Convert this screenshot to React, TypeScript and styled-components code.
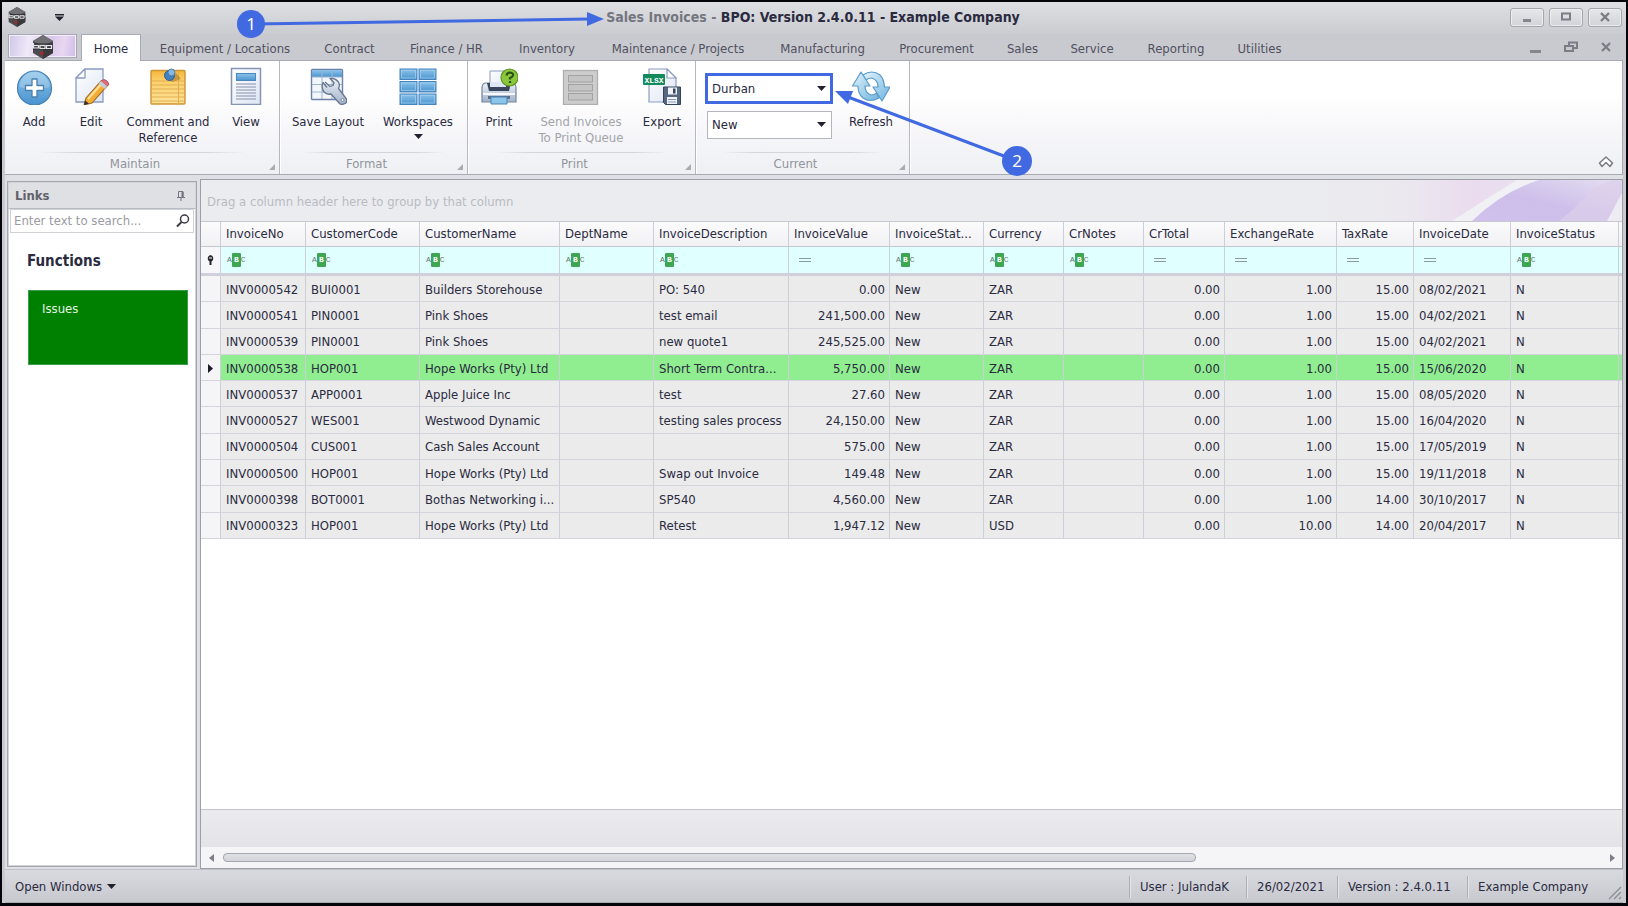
import React from "react";
import styled, { createGlobalStyle, css } from "styled-components";

const uiFont = `"DejaVu Sans Condensed", "Noto Sans", sans-serif`;
const ink = "#2a2a40";
const accent = "#4169e1";
const line = "#a9abb4";

const GlobalStyle = createGlobalStyle`
  *, *::before, *::after { box-sizing: border-box; }
  body { margin: 0; background: #000; }
  button, input, select, table { font: inherit; color: inherit; }
`;

/* ---------- window frame ---------- */

const Frame = styled.div`
  position: relative;
  display: flex;
  flex-direction: column;
  min-height: 100vh;
  border: solid #04040a;
  border-width: 2px 2px 3px;
  padding: 0 3px;
  background: #c9cad0;
  color: ${ink};
  font: 13px/16px ${uiFont};
  overflow: hidden;
`;

const TitleBar = styled.header`
  display: grid;
  grid-template-columns: 120px 1fr 120px;
  align-items: center;
  height: 32px;
  margin: 0 -3px;
  padding: 0 4px 2px 2px;
  background: linear-gradient(#dedfe2, #cbccd1);
`;

const QuickAccess = styled.div`
  display: flex;
  align-items: center;
  gap: 28px;
  padding-left: 3px;
`;

const Title = styled.h1`
  margin: 0;
  text-align: center;
  font: bold 14px/16px ${uiFont};
  white-space: nowrap;
  span { color: #74767f; }
`;

const WindowButtons = styled.div`
  display: flex;
  justify-content: flex-end;
  gap: 5px;
`;

const WindowButton = styled.button`
  display: grid;
  place-items: center;
  width: 34px;
  height: 19px;
  padding: 0;
  border: 1px solid #a4a6ae;
  border-radius: 3px;
  background: linear-gradient(#e6e7ea, #d2d3d8);
  box-shadow: inset 0 0 0 1px #eeeef1;
`;

const PlainButton = styled.button`
  display: grid;
  place-items: center;
  padding: 0;
  border: 0;
  background: none;
`;

const TabRow = styled.nav`
  display: flex;
  height: 26px;
  padding-left: 3px;
`;

const AppButton = styled.button`
  display: grid;
  place-items: center;
  width: 69px;
  height: 24px;
  margin-right: 4px;
  padding: 0;
  border: 1px solid #a9a6b6;
  background: linear-gradient(100deg, #cfc6e8, #efe9f8 30%, #d9c8ea 60%, #e8d6f2 80%, #cdbce6);
  box-shadow: inset 0 0 0 1px #f4f0fa;
`;

const Tab = styled.button<{ $width: number; $active?: boolean }>`
  flex: 0 0 ${(p) => p.$width}px;
  height: 27px;
  padding: 2px 0 0;
  border: 0;
  background: none;
  color: #50505e;
  white-space: nowrap;
  text-align: center;
  ${(p) =>
    p.$active &&
    css`
      z-index: 1;
      margin-right: 2px;
      border: 1px solid ${line};
      border-bottom: 0;
      background: #fff;
      color: ${ink};
    `}
`;

const ChildButtons = styled.div`
  display: flex;
  align-items: center;
  gap: 22px;
  margin-left: auto;
  padding-right: 11px;
`;

/* ---------- ribbon ---------- */

const Ribbon = styled.section`
  display: flex;
  height: 115px;
  border: 1px solid ${line};
  border-width: 1px 1px 1px 0;
  background: linear-gradient(#fff 30%, #f6f6f9 65%, #eef0f3);
`;

const Group = styled.div<{ $width: number }>`
  display: flex;
  flex-direction: column;
  flex: 0 0 ${(p) => p.$width}px;
  border-right: 1px solid #b6b8c0;
  box-shadow: 1px 0 #fff;
`;

const GroupTools = styled.div<{ $indent?: number }>`
  display: flex;
  flex: 1;
  padding-left: ${(p) => p.$indent ?? 0}px;
`;

const GroupCaption = styled.div`
  position: relative;
  height: 22px;
  padding: 4px 14px 0 0;
  text-align: center;
  color: #92949c;
  &::before {
    content: "";
    position: absolute;
    inset: 0 12% auto;
    height: 1px;
    background: linear-gradient(90deg, transparent, #d3d5da 20%, #d3d5da 80%, transparent);
  }
  &::after {
    content: "";
    position: absolute;
    right: 4px;
    bottom: 4px;
    border: 3px solid;
    border-color: transparent #a9abb2 #a9abb2 transparent;
  }
`;

const Tool = styled.button<{ $width: number }>`
  display: flex;
  flex-direction: column;
  align-items: center;
  flex: 0 0 ${(p) => p.$width}px;
  padding: 6px 0 0;
  border: 0;
  background: none;
  text-align: center;
  white-space: pre-line;
  &:disabled { color: #a2a4aa; }
  > svg:first-child { margin-bottom: 9px; }
  > svg + svg { margin-top: 4px; }
`;

const ComboStack = styled.div`
  display: flex;
  flex-direction: column;
  gap: 7px;
  width: 128px;
  padding-top: 12px;
`;

const Combo = styled.div<{ $marked?: boolean }>`
  position: relative;
  height: ${(p) => (p.$marked ? 31 : 28)}px;
  margin: ${(p) => (p.$marked ? "0" : "0 1px 0 2px")};
  border: ${(p) => (p.$marked ? `3px solid ${accent}` : "1px solid #b4b6be")};
  background: #fff;
  select {
    width: 100%;
    height: 100%;
    padding: 0 20px 0 4px;
    border: 0;
    background: none;
    appearance: none;
  }
  svg {
    position: absolute;
    top: 10px;
    right: ${(p) => (p.$marked ? 4 : 5)}px;
    pointer-events: none;
  }
`;

const Collapse = styled(PlainButton)`
  align-self: flex-end;
  margin: 0 8px 6px auto;
`;

/* ---------- work area ---------- */

const WorkArea = styled.main`
  display: flex;
  flex: 1;
  gap: 3px;
  padding: 4px 0 0 2px;
  background: #dfe0e5;
`;

const SidePanel = styled.aside`
  flex: 0 0 190px;
  margin: 2px 0 2px;
  border: 1px solid #a4a6b0;
  box-shadow: inset 0 0 0 1px #d2d3d8;
  background: #fff;
`;

const SideHeader = styled.div`
  display: flex;
  align-items: center;
  justify-content: space-between;
  height: 27px;
  padding: 0 10px 0 6px;
  border: 1px solid #d2d3d8;
  border-bottom-color: #b9bbc3;
  background: #dfe0e3;
  color: #5f616b;
  font-weight: bold;
`;

const Search = styled.label`
  display: flex;
  align-items: center;
  height: 24px;
  margin: 0 2px;
  padding: 0 3px;
  border: 1px solid #d0d1d7;
  input {
    flex: 1;
    min-width: 0;
    padding: 0;
    border: 0;
    outline: 0;
    background: none;
  }
  input::placeholder { color: #999ba3; opacity: 1; }
`;

const SideTitle = styled.h2`
  margin: 18px 0 19px 19px;
  font: bold 15px/20px ${uiFont};
`;

const Tile = styled.button`
  display: flex;
  width: calc(100% - 28px);
  height: 75px;
  margin: 0 8px 0 20px;
  padding: 10px 13px;
  border: 1px solid #3c9c50;
  background: #008000;
  color: #e4f4e4;
`;

const GridPanel = styled.section`
  display: flex;
  flex-direction: column;
  flex: 1;
  min-width: 0;
  border: 1px solid #9c9ea8;
  background: #fff;
`;

const GroupBox = styled.div`
  position: relative;
  display: flex;
  align-items: center;
  height: 41px;
  padding: 3px 6px 0;
  background: #ebecef;
  color: #b9bbc3;
  overflow: hidden;
  svg { position: absolute; top: 0; right: 0; }
`;

const Table = styled.table`
  width: 100%;
  height: 318px;
  table-layout: fixed;
  border-collapse: separate;
  border-spacing: 0;
`;

const cell = css`
  padding: 0 4px;
  border-right: 1px solid #cdcfd8;
  border-bottom: 1px solid #d3d4dc;
  overflow: hidden;
  white-space: nowrap;
  text-overflow: ellipsis;
  &:last-child { border-right: 0; }
`;

const HeadCell = styled.th`
  ${cell}
  height: 26px;
  padding-left: 5px;
  border-top: 1px solid #c6c7cf;
  border-bottom: 1px solid #c6c7cf;
  background: linear-gradient(#fbfbfc, #f1f1f4);
  font-weight: normal;
  text-align: left;
`;

const FilterCell = styled.td<{ $marker?: boolean }>`
  ${cell}
  height: 29px;
  border-bottom: 3px solid #cfd0da;
  background: ${(p) => (p.$marker ? "#f7f7fa" : "#e0ffff")};
  svg { display: block; }
  > svg { margin: 1px auto 0; }
`;

const Row = styled.tr<{ $current?: boolean }>`
  background: ${(p) => (p.$current ? "#90ee90" : "#ebebeb")};
`;

const Cell = styled.td<{ $right?: boolean }>`
  ${cell}
  padding: 2px 4px 0 5px;
  text-align: ${(p) => (p.$right ? "right" : "left")};
`;

const MarkerCell = styled.th`
  ${cell}
  background: #f5f5f8;
  svg { display: block; margin: 2px auto 0; }
`;

const FilterButton = styled.button`
  display: flex;
  align-items: center;
  height: 14px;
  padding: 0 2px;
  border: 0;
  background: none;
  color: #66756f;
  font: 8px/14px "Liberation Mono", monospace;
  b {
    width: 9px;
    border-radius: 1px;
    background: #3ea552;
    color: #fff;
    text-align: center;
  }
`;

const Summary = styled.div`
  height: 38px;
  margin-top: auto;
  border-top: 1px solid #c4c6cc;
  background: linear-gradient(#ebebee, #e4e4e8);
`;

const ScrollBar = styled.div`
  display: flex;
  align-items: center;
  gap: 9px;
  height: 21px;
  padding: 0 7px 0 8px;
  background: #f5f5f8;
`;

const Track = styled.div`
  flex: 1;
  div {
    width: calc(71% - 5px);
    height: 9px;
    border: 1px solid #a4a7af;
    border-radius: 4px;
    background: linear-gradient(#dfe1e5, #d2d4d9);
  }
`;

/* ---------- status bar ---------- */

const StatusBar = styled.footer`
  display: flex;
  align-items: center;
  height: 34px;
  padding: 1px 1px 0 10px;
  border-top: 1px solid #c0c1c8;
  border-bottom: 1px solid #a9abb4;
  background: linear-gradient(#d9dae0, #c8c9cf);
`;

const OpenWindows = styled(PlainButton)`
  display: flex;
  align-items: center;
  gap: 5px;
  margin-right: auto;
`;

const StatusItem = styled.span<{ $width: number }>`
  width: ${(p) => p.$width}px;
  padding-left: 10px;
  border-left: 1px solid #adafb7;
  box-shadow: inset 1px 0 #e3e4e8;
  line-height: 22px;
  white-space: nowrap;
`;

const Grip = styled.svg`
  align-self: flex-end;
  margin-bottom: 2px;
`;

const Notes = styled.svg`
  position: absolute;
  inset: -2px auto auto -2px;
  pointer-events: none;
  text { font: 17px/20px "Noto Sans", sans-serif; }
`;

/* ---------- drawings ---------- */

const Caret = () => (
  <svg width="9" height="5" viewBox="0 0 9 5" aria-hidden="true">
    <path d="M0 0h9L4.500 5z" fill="#22222e" />
  </svg>
);

const Logo = ({ size }: { size: number }) => (
  <svg width={size} height={size} viewBox="0 0 24 24" aria-hidden="true">
    <path d="M12 0l10 6v12l-10 6L2 18V6z" fill="#4c4c50" />
    <path d="M12 0l10 6-10 5L2 6z" fill="#707074" />
    <path d="M12 12l10 0v6l-10 6z" fill="#3a3a3e" />
    <path d="M2 9h20M2 14h20" stroke="#2a2a2e" strokeWidth="1" />
    <path d="M2.500 8v5h5v-2.500h-5M9 13.500v-3h5v3zM15.500 13.500v-3h5v3z" fill="none" stroke="#e6e6e8" strokeWidth="1.200" />
    <path d="M9 17l2 2.500 1.500-2.500" fill="none" stroke="#a8282c" strokeWidth="1.600" />
  </svg>
);

const Defs = () => (
  <svg width="0" height="0" style={{ position: "absolute" }} aria-hidden="true">
    <defs>
      <linearGradient id="blue" x1="0" y1="0" x2="0" y2="1">
        <stop offset="0" stopColor="#8cc4ea" />
        <stop offset="1" stopColor="#4a93cf" />
      </linearGradient>
      <linearGradient id="page" x1="0" y1="0" x2="1" y2="1">
        <stop offset="0" stopColor="#ffffff" />
        <stop offset="1" stopColor="#dde5f4" />
      </linearGradient>
      <linearGradient id="note" x1="0" y1="0" x2="0" y2="1">
        <stop offset="0" stopColor="#f5b53c" />
        <stop offset="0.3" stopColor="#fbd069" />
        <stop offset="1" stopColor="#fee39a" />
      </linearGradient>
      <linearGradient id="steel" x1="0" y1="0" x2="0" y2="1">
        <stop offset="0" stopColor="#eef2f8" />
        <stop offset="1" stopColor="#9fb0c8" />
      </linearGradient>
      <linearGradient id="ice" x1="0" y1="0" x2="1" y2="1">
        <stop offset="0" stopColor="#e2f4fc" />
        <stop offset="1" stopColor="#6fb4e0" />
      </linearGradient>
      <linearGradient id="petal" x1="0" y1="1" x2="1" y2="0">
        <stop offset="0" stopColor="#d0c2ec" />
        <stop offset="0.45" stopColor="#cdbeea" />
        <stop offset="1" stopColor="#e4def1" />
      </linearGradient>
      <linearGradient id="blush" x1="0" y1="0" x2="1" y2="0">
        <stop offset="0" stopColor="#ebecef" />
        <stop offset="0.45" stopColor="#ebe9ef" />
        <stop offset="0.8" stopColor="#eadcee" />
        <stop offset="1" stopColor="#e9e0f0" />
      </linearGradient>
    </defs>
  </svg>
);

const Icon = ({ children }: { children: React.ReactNode }) => (
  <svg width="38" height="38" viewBox="0 0 38 38" aria-hidden="true">
    {children}
  </svg>
);

const AddIcon = () => (
  <Icon>
    <circle cx="19.500" cy="21" r="17" fill="url(#blue)" stroke="#4682b4" strokeWidth="1.200" />
    <path d="M4.500 20a15 15 0 0 1 30 0q-15 5-30 0z" fill="#fff" opacity="0.22" />
    <path d="M17 12h5v6.500h6.500v5H22V30h-5v-6.500h-6.500v-5H17z" fill="#fff" stroke="#4a7fae" strokeWidth="1.300" strokeLinejoin="round" />
  </Icon>
);

const EditIcon = () => (
  <Icon>
    <path d="M13 2h18v33H4V11z" fill="url(#page)" stroke="#8b9cc2" strokeWidth="1.300" />
    <path d="M13 2v9H4z" fill="#fff" stroke="#8b9cc2" strokeWidth="1.300" strokeLinejoin="round" />
    <path d="M14 31l15-17 6 5-15 17-8 2z" fill="#f5ac34" stroke="#9a6a2c" strokeWidth="1.100" />
    <path d="M16 32l15-17" stroke="#fde09a" strokeWidth="2" />
    <path d="M29 14l3-1.500q4 1 5 5L35 19z" fill="#e07080" stroke="#b05060" />
    <path d="M26.500 16.500l6 5.500 2.500-3-6-5z" fill="#c8ccd4" />
    <path d="M13 33.500l4 3-5 1.500z" fill="#3c3030" />
  </Icon>
);

const NoteIcon = () => (
  <Icon>
    <rect x="2" y="3.500" width="34" height="33.500" rx="1" fill="url(#note)" stroke="#cf9334" strokeWidth="1.400" />
    <path d="M3 14h32M3 18h32M3 22h32M3 26h32M3 30h32M3 34h32" stroke="#e3ad50" />
    <path d="M29.500 5v32" stroke="#e3ad50" />
    <path d="M21 13l6-7 5 6-9 3z" fill="#9a6a20" opacity="0.5" />
    <circle cx="20.500" cy="8.500" r="5" fill="#4382bd" stroke="#2d5f92" />
    <circle cx="22.500" cy="5.500" r="3.500" fill="#86b9e2" stroke="#3a70a4" strokeWidth="0.800" />
  </Icon>
);

const ViewIcon = () => (
  <Icon>
    <rect x="4.500" y="1.500" width="29" height="36" fill="url(#page)" stroke="#8794b4" strokeWidth="1.500" />
    <rect x="9.500" y="6.500" width="19" height="7" fill="url(#blue)" stroke="#4d86ba" />
    <path d="M9 17h20M9 20h20M9 23h20M9 26h20M9 29h20M9 32h20" stroke="#8590aa" strokeWidth="1.200" />
  </Icon>
);

const LayoutIcon = () => (
  <Icon>
    <rect x="2.500" y="2.500" width="31" height="30" rx="1" fill="#f3f6fb" stroke="#6c82aa" strokeWidth="1.400" />
    <rect x="3" y="3" width="30" height="7" fill="url(#blue)" />
    <path d="M3 10h30M3 17.500h30M3 25h30M13 3v29M23 3v29" stroke="#9fb2d0" />
    <path
      d="M16 14l5 4.500 3-1 1-3-4-4q5-.5 8 3 2.500 3 .5 7l8 10.500q1 3-1.500 4.500t-5 .5l-9-10q-4 1-7-2-3-4-1-9.500l4 5"
      fill="url(#steel)"
      stroke="#68778f"
      strokeWidth="1.300"
      strokeLinejoin="round"
      transform="translate(0 1)"
    />
    <circle cx="33.500" cy="33" r="1.500" fill="#fff" stroke="#68778f" strokeWidth="0.800" />
  </Icon>
);

const WorkspacesIcon = () => (
  <Icon>
    {[2, 14.500, 27].map((y) =>
      [1, 20].map((x) => (
        <g key={`${x}-${y}`}>
          <rect x={x} y={y} width="17" height="10.500" fill="url(#blue)" stroke="#4684bd" />
          <rect x={x + 1.500} y={y + 1.500} width="14" height="7.500" fill="none" stroke="#a6d0ee" strokeWidth="0.700" />
        </g>
      ))
    )}
  </Icon>
);

const PrintIcon = () => (
  <Icon>
    <path d="M10 4h16v18H10z" fill="url(#page)" stroke="#8b9cc2" />
    <path d="M5 16h28q3 1 3 5v14H2V21q0-4 3-5z" fill="url(#steel)" stroke="#76869f" strokeWidth="1.200" />
    <path d="M7 16h24l-2 8H9z" fill="#38445c" />
    <path d="M10 15h16v5H10z" fill="#dfe6f3" />
    <path d="M3 27h32" stroke="#f6f8fb" strokeWidth="2" />
    <path d="M8 29h22v3H8z" fill="#5c6c88" />
    <path d="M11 30h16v7H11z" fill="#8cc4ea" stroke="#4a83b4" />
    <circle cx="29.500" cy="10.500" r="8.500" fill="#8cc63a" stroke="#5d9424" strokeWidth="1.200" />
    <path d="M26.500 8.500q.5-3 3.500-3 3.500.5 3 3-.5 1.500-3 2.500v1.500M30 14v2" fill="none" stroke="#26501a" strokeWidth="2.200" />
  </Icon>
);

const QueueIcon = () => (
  <Icon>
    <rect x="1.500" y="3.500" width="34" height="34" fill="#cdcdcd" stroke="#aeaeae" strokeWidth="1.300" />
    {[8, 17, 26].map((y) => (
      <rect key={y} x="6.500" y={y + 0.500} width="24" height="6.500" fill="#c4c4c4" stroke="#a2a2a2" />
    ))}
  </Icon>
);

const ExportIcon = () => (
  <Icon>
    <path d="M6 2h18l9 9v24H6z" fill="url(#page)" stroke="#8b9cc2" strokeWidth="1.200" />
    <path d="M24 2v9h9z" fill="#fff" stroke="#8b9cc2" strokeWidth="1.200" strokeLinejoin="round" />
    <rect x="0" y="7" width="22" height="11" rx="1" fill="#138a5c" />
    <text x="11" y="15.500" textAnchor="middle" fill="#fff" fontFamily="Liberation Mono, monospace" fontSize="8" fontWeight="bold">
      XLSX
    </text>
    <path d="M20.500 20H37.500v17.500H22.500l-2-2z" fill="#566880" stroke="#34445c" />
    <rect x="25" y="20.500" width="9" height="7" fill="#f0f4fa" />
    <rect x="30" y="21.500" width="2.500" height="5" fill="#34445c" />
    <rect x="24" y="30" width="10" height="7" fill="#f0f4fa" />
    <path d="M25 32.500h8M25 35h8" stroke="#8a9ab4" />
  </Icon>
);

const RefreshIcon = () => (
  <Icon>
    <path
      d="M11 8Q20 2 28 8q4 4 4.500 12H38l-8 14-9-14h5q0-7-6-9-4 0-6 2z"
      fill="url(#ice)" stroke="#5b9cc8" strokeWidth="1.200" strokeLinejoin="round"
    />
    <path
      d="M27 31q-9 5-16 0-5-4-5-12H.500L9 5l9 14h-5q0 7 6 9 4 0 5.500-2z"
      fill="url(#ice)" stroke="#5b9cc8" strokeWidth="1.200" strokeLinejoin="round"
    />
  </Icon>
);

/* ---------- data ---------- */

const tabs: [string, number][] = [
  ["Home", 60], ["Equipment / Locations", 164], ["Contract", 85], ["Finance / HR", 109],
  ["Inventory", 92], ["Maintenance / Projects", 170], ["Manufacturing", 119], ["Procurement", 109],
  ["Sales", 63], ["Service", 76], ["Reporting", 92], ["Utilities", 75],
];

type Column = { name: string; width: number; filter: "abc" | "eq"; right?: boolean };

const columns: Column[] = [
  { name: "InvoiceNo", width: 85, filter: "abc" },
  { name: "CustomerCode", width: 114, filter: "abc" },
  { name: "CustomerName", width: 140, filter: "abc" },
  { name: "DeptName", width: 94, filter: "abc" },
  { name: "InvoiceDescription", width: 135, filter: "abc" },
  { name: "InvoiceValue", width: 101, filter: "eq", right: true },
  { name: "InvoiceStat...", width: 94, filter: "abc" },
  { name: "Currency", width: 80, filter: "abc" },
  { name: "CrNotes", width: 80, filter: "abc" },
  { name: "CrTotal", width: 81, filter: "eq", right: true },
  { name: "ExchangeRate", width: 112, filter: "eq", right: true },
  { name: "TaxRate", width: 77, filter: "eq", right: true },
  { name: "InvoiceDate", width: 97, filter: "eq" },
  { name: "InvoiceStatus", width: 108, filter: "abc" },
];

const rows = [
  ["INV0000542", "BUI0001", "Builders Storehouse", "", "PO: 540", "0.00", "New", "ZAR", "", "0.00", "1.00", "15.00", "08/02/2021", "N"],
  ["INV0000541", "PIN0001", "Pink Shoes", "", "test email", "241,500.00", "New", "ZAR", "", "0.00", "1.00", "15.00", "04/02/2021", "N"],
  ["INV0000539", "PIN0001", "Pink Shoes", "", "new quote1", "245,525.00", "New", "ZAR", "", "0.00", "1.00", "15.00", "04/02/2021", "N"],
  ["INV0000538", "HOP001", "Hope Works (Pty) Ltd", "", "Short Term Contra...", "5,750.00", "New", "ZAR", "", "0.00", "1.00", "15.00", "15/06/2020", "N"],
  ["INV0000537", "APP0001", "Apple Juice Inc", "", "test", "27.60", "New", "ZAR", "", "0.00", "1.00", "15.00", "08/05/2020", "N"],
  ["INV0000527", "WES001", "Westwood Dynamic", "", "testing sales process", "24,150.00", "New", "ZAR", "", "0.00", "1.00", "15.00", "16/04/2020", "N"],
  ["INV0000504", "CUS001", "Cash Sales Account", "", "", "575.00", "New", "ZAR", "", "0.00", "1.00", "15.00", "17/05/2019", "N"],
  ["INV0000500", "HOP001", "Hope Works (Pty) Ltd", "", "Swap out Invoice", "149.48", "New", "ZAR", "", "0.00", "1.00", "15.00", "19/11/2018", "N"],
  ["INV0000398", "BOT0001", "Bothas Networking i...", "", "SP540", "4,560.00", "New", "ZAR", "", "0.00", "1.00", "14.00", "30/10/2017", "N"],
  ["INV0000323", "HOP001", "Hope Works (Pty) Ltd", "", "Retest", "1,947.12", "New", "USD", "", "0.00", "10.00", "14.00", "20/04/2017", "N"],
];

const CURRENT_ROW = 3;

/* ---------- parts ---------- */

const FilterMark = ({ column }: { column: Column }) => (
  <FilterButton aria-label={`Filter ${column.name}`}>
    {column.filter === "abc" ? (
      <>
        A<b>B</b>C
      </>
    ) : (
      <svg width="16" height="6" viewBox="0 0 16 6" aria-hidden="true">
        <path d="M4 1.500h12M4 4.500h12" stroke="#8b9a9e" />
      </svg>
    )}
  </FilterButton>
);

const InvoiceTable = () => (
  <Table>
    <colgroup>
      <col width="20" />
      {columns.map((c) => (
        <col key={c.name} width={c.width} />
      ))}
      <col />
    </colgroup>
    <thead>
      <tr>
        <HeadCell aria-label="Row marker" />
        {columns.map((c) => (
          <HeadCell key={c.name} scope="col">{c.name}</HeadCell>
        ))}
        <HeadCell aria-hidden="true" />
      </tr>
      <tr>
        <FilterCell $marker>
          <svg width="9" height="11" viewBox="0 0 9 11" aria-hidden="true">
            <path d="M4.500 0a3.500 3.500 0 0 1 1 6.500V10h-2V6.500A3.500 3.500 0 0 1 4.500 0z" fill="#26262e" />
            <path d="M3 3h3" stroke="#fff" />
          </svg>
        </FilterCell>
        {columns.map((c) => (
          <FilterCell key={c.name}>
            <FilterMark column={c} />
          </FilterCell>
        ))}
        <FilterCell />
      </tr>
    </thead>
    <tbody>
      {rows.map((row, r) => (
        <Row key={row[0]} $current={r === CURRENT_ROW}>
          <MarkerCell scope="row" aria-label={row[0]}>
            {r === CURRENT_ROW && (
              <svg width="5" height="9" viewBox="0 0 5 9" aria-hidden="true">
                <path d="M0 0l5 4.500L0 9z" fill="#1c1c28" />
              </svg>
            )}
          </MarkerCell>
          {row.map((value, c) => (
            <Cell key={columns[c].name} $right={columns[c].right}>{value}</Cell>
          ))}
          <Cell />
        </Row>
      ))}
    </tbody>
  </Table>
);

const ScrollArrow = ({ d }: { d: string }) => (
  <svg width="5" height="8" viewBox="0 0 5 8" aria-hidden="true">
    <path d={d} fill="#7d8088" />
  </svg>
);

export default function App() {
  return (
    <Frame>
      <GlobalStyle />
      <Defs />
      <TitleBar>
        <QuickAccess>
          <Logo size={20} />
          <PlainButton aria-label="Customize quick access">
            <svg width="9" height="7" viewBox="0 0 9 7" aria-hidden="true">
              <path d="M0 0h9v1.500H0zM0 2.500h9L4.500 7z" fill="#22222e" />
            </svg>
          </PlainButton>
        </QuickAccess>
        <Title>
          <span>Sales Invoices - </span>BPO: Version 2.4.0.11 - Example Company
        </Title>
        <WindowButtons>
          <WindowButton aria-label="Minimize">
            <svg width="10" height="10"><path d="M1 7h8v3H1z" fill="#85878f" /></svg>
          </WindowButton>
          <WindowButton aria-label="Maximize">
            <svg width="10" height="10"><rect x="1" y="1.500" width="8" height="6" fill="none" stroke="#7b7d86" strokeWidth="2" /></svg>
          </WindowButton>
          <WindowButton aria-label="Close">
            <svg width="10" height="10"><path d="M1 1l8 8M9 1L1 9" stroke="#7b7d86" strokeWidth="2.400" /></svg>
          </WindowButton>
        </WindowButtons>
      </TitleBar>

      <TabRow>
        <AppButton aria-label="Application menu"><Logo size={24} /></AppButton>
        {tabs.map(([name, width], i) => (
          <Tab key={name} $width={width} $active={i === 0}>{name}</Tab>
        ))}
        <ChildButtons>
          <PlainButton aria-label="Minimize child window">
            <svg width="12" height="12"><path d="M0 9h11v3H0z" fill="#85878f" /></svg>
          </PlainButton>
          <PlainButton aria-label="Restore child window">
            <svg width="14" height="12">
              <path d="M5 4V1.500h8V7h-3" fill="none" stroke="#7b7d86" strokeWidth="2" />
              <rect x="1" y="5" width="8" height="5" fill="none" stroke="#7b7d86" strokeWidth="2" />
            </svg>
          </PlainButton>
          <PlainButton aria-label="Close child window">
            <svg width="12" height="10"><path d="M2 1l8 8M10 1L2 9" stroke="#7b7d86" strokeWidth="2.200" /></svg>
          </PlainButton>
        </ChildButtons>
      </TabRow>

      <Ribbon>
        <Group $width={275}>
          <GroupTools>
            <Tool $width={58}><AddIcon />Add</Tool>
            <Tool $width={56}><EditIcon />Edit</Tool>
            <Tool $width={98}><NoteIcon />{"Comment and\nReference"}</Tool>
            <Tool $width={58}><ViewIcon />View</Tool>
          </GroupTools>
          <GroupCaption>Maintain</GroupCaption>
        </Group>
        <Group $width={188}>
          <GroupTools $indent={3}>
            <Tool $width={90}><LayoutIcon />Save Layout</Tool>
            <Tool $width={90}><WorkspacesIcon />Workspaces<Caret /></Tool>
          </GroupTools>
          <GroupCaption>Format</GroupCaption>
        </Group>
        <Group $width={228}>
          <GroupTools $indent={2}>
            <Tool $width={58}><PrintIcon />Print</Tool>
            <Tool $width={106} disabled><QueueIcon />{"Send Invoices\nTo Print Queue"}</Tool>
            <Tool $width={56}><ExportIcon />Export</Tool>
          </GroupTools>
          <GroupCaption>Print</GroupCaption>
        </Group>
        <Group $width={214}>
          <GroupTools $indent={9}>
            <ComboStack>
              <Combo $marked>
                <select aria-label="Site" defaultValue="Durban"><option>Durban</option></select>
                <Caret />
              </Combo>
              <Combo>
                <select aria-label="Status" defaultValue="New"><option>New</option></select>
                <Caret />
              </Combo>
            </ComboStack>
            <Tool $width={76}><RefreshIcon />Refresh</Tool>
          </GroupTools>
          <GroupCaption>Current</GroupCaption>
        </Group>
        <Collapse aria-label="Collapse ribbon">
          <svg width="16" height="12" viewBox="0 0 16 12">
            <path d="M1.500 7L8 1l6.500 6-2.500 3.500L8 6.500l-4 4z" fill="#fff" stroke="#7b7d86" strokeWidth="1.500" strokeLinejoin="round" />
          </svg>
        </Collapse>
      </Ribbon>

      <WorkArea>
        <SidePanel>
          <SideHeader>
            Links
            <svg width="8" height="10" viewBox="0 0 8 10" aria-hidden="true">
              <path d="M1.500 6V.500h4.500V6M0 6.500h8M4 7v3" fill="none" stroke="#72747e" />
              <path d="M4.500 1h2v5h-2z" fill="#72747e" />
            </svg>
          </SideHeader>
          <Search>
            <input type="text" aria-label="Search links" placeholder="Enter text to search..." />
            <svg width="14" height="14" viewBox="0 0 14 14" aria-hidden="true">
              <circle cx="8.500" cy="5" r="4" fill="none" stroke="#3a3a46" strokeWidth="1.500" />
              <path d="M5.500 8L1 12.500" stroke="#3a3a46" strokeWidth="2" />
            </svg>
          </Search>
          <SideTitle>Functions</SideTitle>
          <Tile>Issues</Tile>
        </SidePanel>

        <GridPanel>
          <GroupBox>
            Drag a column header here to group by that column
            <svg width="320" height="41" viewBox="0 0 320 41" aria-hidden="true">
              <path d="M0 0h215L150 41H0z" fill="url(#blush)" />
              <path d="M215 0h25q-40 15-70 41h-20z" fill="#f1f1f5" />
              <path d="M170 41Q200 12 237 0h83v41z" fill="url(#petal)" />
              <path d="M257 41q20-16 32-30 12-8 22-11h9v41z" fill="#dccfea" opacity="0.7" />
              <path d="M305 41l15-28v28z" fill="#ececf2" />
            </svg>
          </GroupBox>
          <InvoiceTable />
          <Summary />
          <ScrollBar>
            <ScrollArrow d="M5 0v8L0 4z" />
            <Track><div /></Track>
            <ScrollArrow d="M0 0v8l5-4z" />
          </ScrollBar>
        </GridPanel>
      </WorkArea>

      <StatusBar>
        <OpenWindows>Open Windows <Caret /></OpenWindows>
        <StatusItem $width={117}>User : JulandaK</StatusItem>
        <StatusItem $width={91}>26/02/2021</StatusItem>
        <StatusItem $width={130}>Version : 2.4.0.11</StatusItem>
        <StatusItem $width={141}>Example Company</StatusItem>
        <Grip width="14" height="14" viewBox="0 0 14 14" aria-hidden="true">
          <path d="M1 13L13 1M6 13l7-7M11 13l2-2" stroke="#8b8d96" strokeWidth="1.300" />
        </Grip>
      </StatusBar>

      <Notes width="1100" height="200" viewBox="0 0 1100 200">
        <g stroke={accent} strokeWidth="3">
          <path d="M251 24L590 19" />
          <path d="M1017 161L848 97" />
        </g>
        <g fill={accent}>
          <path d="M604 19l-17-7v14z" />
          <path d="M835 91l18 0-5 13z" />
          <circle cx="251" cy="24" r="14" />
          <circle cx="1017" cy="161" r="15" />
        </g>
        <g fill="#fff" textAnchor="middle">
          <text x="251" y="30">1</text>
          <text x="1017" y="167">2</text>
        </g>
      </Notes>
    </Frame>
  );
}
